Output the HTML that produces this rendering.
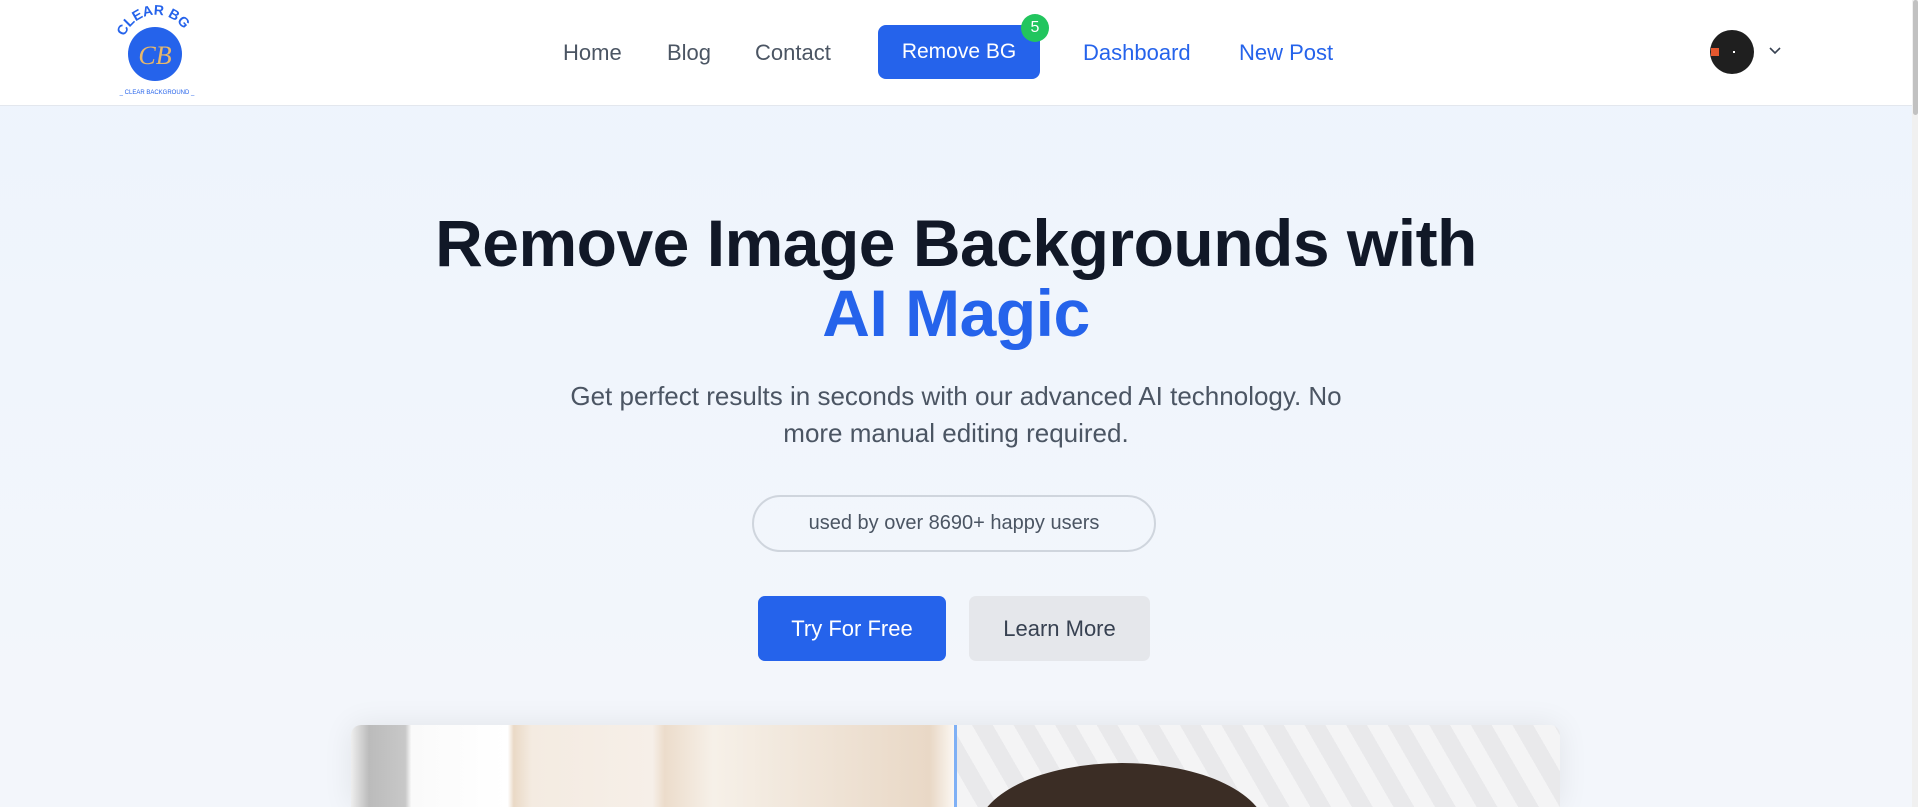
<!DOCTYPE html>
<html><head><meta charset="utf-8"><style>
*{margin:0;padding:0;box-sizing:border-box}
html,body{width:1918px;height:807px;overflow:hidden}
body{font-family:"Liberation Sans",sans-serif;background:linear-gradient(#edf4fd,#f3f6fb 85%);position:relative}
header{position:absolute;left:0;top:0;width:1912px;height:106px;background:#fff;border-bottom:1px solid #e3e7ee}
.sb{position:absolute;right:0;top:0;width:6px;height:807px;background:#f0f0f0}
.sb i{position:absolute;left:1px;top:0;width:5px;height:115px;background:#c1c1c1;border-radius:3px}
.nav{position:absolute;top:40px;font-size:22px;color:#4b5563}
.blue{color:#2563eb}
.btn{position:absolute;left:878px;top:25px;width:162px;height:54px;background:#2563eb;border-radius:8px;color:#fff;font-size:21px;text-align:center;line-height:54px}
.badge{position:absolute;left:1021px;top:14px;width:28px;height:28px;border-radius:50%;background:#22c55e;color:#fff;font-size:16px;text-align:center;line-height:28px}
h1{position:absolute;left:0;width:1912px;top:208px;text-align:center;font-size:66px;font-weight:bold;color:#111827;line-height:70px;letter-spacing:-0.5px}
p.sub{position:absolute;left:456px;width:1000px;top:378px;text-align:center;font-size:26px;line-height:37px;color:#4b5563}
.pill{position:absolute;left:752px;top:495px;width:404px;height:57px;border:2px solid #cfd5dd;border-radius:29px;text-align:center;line-height:53px;font-size:20px;color:#4b5563}
.b1,.b2{position:absolute;top:596px;height:65px;border-radius:7px;font-size:22px;text-align:center;line-height:65px}
.b1{left:758px;width:188px;background:#2563eb;color:#fff}
.b2{left:969px;width:181px;background:#e5e7eb;color:#374151}
.img{position:absolute;left:351px;top:725px;width:1209px;height:82px;border-radius:10px 10px 0 0;overflow:hidden;box-shadow:0 0 30px rgba(0,0,0,.08)}
.l{position:absolute;left:0;top:0;width:603px;height:100%;background:linear-gradient(90deg,#eee 0,#bbb 3%,#c8c8c8 9%,#fafafa 10%,#fff 26%,#ead9c6 27%,#f4ebe1 30%,#f6efe8 50%,#ecdccb 52%,#f6f0e8 60%,#e9d8c6 96%,#fbf7f2)}
.r{position:absolute;left:606px;top:0;width:603px;height:100%;background:repeating-linear-gradient(60deg,#f4f4f5 0 18px,#e9e9eb 18px 36px)}
.dv{position:absolute;left:603px;top:0;width:3px;height:100%;background:#7fb0f5}
.hair{position:absolute;top:38px;width:290px;height:140px;border-radius:50% 50% 0 0;background:#3b2d25}
</style></head><body>
<header>
<svg style="position:absolute;left:115px;top:4px" width="84" height="96" viewBox="0 0 84 96">
<circle cx="40" cy="50" r="27" fill="#2563eb"/>
<text x="40" y="60" font-size="26" font-style="italic" fill="#e8b86a" text-anchor="middle" font-family="Liberation Serif,serif">CB</text>
<path id="a" d="M8 48 A33 33 0 0 1 74 40" fill="none"/>
<text font-size="14" font-weight="bold" fill="#2563eb" text-anchor="middle"><textPath href="#a" startOffset="50%">CLEAR BG</textPath></text>
<text x="42" y="90" font-size="6" fill="#2563eb" text-anchor="middle">_ CLEAR BACKGROUND _</text>
</svg>
<div class="nav" style="left:563px">Home</div>
<div class="nav" style="left:667px">Blog</div>
<div class="nav" style="left:755px">Contact</div>
<div class="btn">Remove BG</div>
<div class="badge">5</div>
<div class="nav blue" style="left:1083px">Dashboard</div>
<div class="nav blue" style="left:1239px">New Post</div>
<div style="position:absolute;left:1710px;top:30px;width:44px;height:44px;border-radius:50%;background:#1f1f1f"><span style="position:absolute;left:1px;top:18px;width:8px;height:8px;background:#e4572e"></span><span style="position:absolute;left:23px;top:21px;width:2px;height:2px;background:#fff"></span></div>
<svg style="position:absolute;left:1768px;top:46px" width="14" height="10"><path d="M2 2l5 5 5-5" stroke="#374151" stroke-width="1.6" fill="none"/></svg>
</header>
<div class="sb"><i></i></div>
<h1>Remove Image Backgrounds with<br><span class="blue">AI Magic</span></h1>
<p class="sub">Get perfect results in seconds with our advanced AI technology. No<br>more manual editing required.</p>
<div class="pill">used by over 8690+ happy users</div>
<div class="b1">Try For Free</div>
<div class="b2">Learn More</div>
<div class="img"><div class="l"></div><div class="r"><div class="hair" style="left:20px"></div></div><div class="dv"></div></div>
</body></html>
